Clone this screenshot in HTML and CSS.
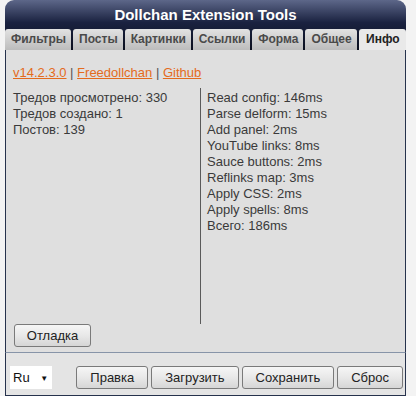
FILE: index.html
```html
<html lang="ru">
<head>
  <meta charset="UTF-8" />
  <title>Dollchan Extension Tools</title>
  <link rel="stylesheet" href="styles.css">
</head>
<body>
  <div class="panel">
    <div class="header">
      <div class="title">Dollchan Extension Tools</div>
      <div class="tabs">
        <div class="tab">Фильтры</div>
        <div class="tab">Посты</div>
        <div class="tab">Картинки</div>
        <div class="tab">Ссылки</div>
        <div class="tab">Форма</div>
        <div class="tab">Общее</div>
        <div class="tab active">Инфо</div>
      </div>
    </div>

    <div class="content">
      <div class="links">
        <a href="#">v14.2.3.0</a> | <a href="#">Freedollchan</a> | <a href="#">Github</a>
      </div>
      <div class="info">
        <div class="col left">
          <div>Тредов просмотрено: 330</div>
          <div>Тредов создано: 1</div>
          <div>Постов: 139</div>
        </div>
        <div class="col right">
          <div>Read config: 146ms</div>
          <div>Parse delform: 15ms</div>
          <div>Add panel: 2ms</div>
          <div>YouTube links: 8ms</div>
          <div>Sauce buttons: 2ms</div>
          <div>Reflinks map: 3ms</div>
          <div>Apply CSS: 2ms</div>
          <div>Apply spells: 8ms</div>
          <div>Всего: 186ms</div>
        </div>
      </div>
      <button class="btn debug">Отладка</button>
    </div>

    <div class="footer">
      <div class="lang">Ru <span class="arrow">&#9660;</span></div>
      <div class="actions">
        <button class="btn">Правка</button>
        <button class="btn">Загрузить</button>
        <button class="btn">Сохранить</button>
        <button class="btn">Сброс</button>
      </div>
    </div>
  </div>
</body>
</html>
```

FILE: styles.css
```css
* {
  margin: 0;
  padding: 0;
  box-sizing: border-box;
}

body {
  font-family: "Liberation Sans", Arial, sans-serif;
  font-size: 13px;
  color: #333;
  background: #f3f3f3;
}

.panel {
  width: 401px;
  margin-left: 5px;
}

.header {
  background: linear-gradient(#5d6789 0%, #1a2240 45%, #0b0f1e 100%);
  border-radius: 9px 9px 0 0;
  padding-top: 5px;
}

.title {
  height: 24px;
  text-align: center;
  color: #fff;
  font-weight: bold;
  font-size: 15px;
  line-height: 20px;
}

.tabs {
  display: flex;
  gap: 2px;
}

.tab {
  height: 21px;
  line-height: 20px;
  padding: 0 5px 0 6px;
  font-size: 12px;
  font-weight: bold;
  color: #4a4a4a;
  background: linear-gradient(#e2e2e2, #bcbcbc);
  border-radius: 3px 3px 0 0;
}

.tab.active {
  flex: 1;
  color: #222;
  text-align: center;
  background: #e9e9e9;
}

.content {
  height: 302px;
  background: #dfdfdf;
  border-left: 1px solid #26324c;
  border-right: 1px solid #26324c;
  padding: 15px 7px 0;
  display: flex;
  flex-direction: column;
}

.links {
  line-height: 16px;
  color: #555;
}

.links a {
  color: #e46b1c;
}

.info {
  display: flex;
  margin-top: 7px;
  height: 236px;
}

.col {
  line-height: 16px;
  color: #3a3a3a;
}

.col.left {
  width: 187px;
  padding-top: 2px;
}

.col.right {
  border-left: 1px solid #5a5a5a;
  padding: 2px 0 0 6px;
}

.btn {
  font-family: "Liberation Sans", Arial, sans-serif;
  font-size: 13px;
  color: #222;
  height: 23px;
  padding: 0 10px;
  border: 1px solid #7a7a7a;
  border-radius: 3px;
  background: linear-gradient(#f6f6f6 0%, #e8e8e8 50%, #d6d6d6 100%);
}

.debug {
  align-self: flex-start;
  width: 77px;
  margin-left: 1px;
}

.footer {
  display: flex;
  align-items: flex-end;
  justify-content: space-between;
  height: 44px;
  background: #e4e4e4;
  border: 1px solid #26324c;
  border-top-color: #8794a8;
  padding: 0 2px 6px 4px;
}

.lang {
  width: 42px;
  height: 23px;
  background: #fff;
  line-height: 23px;
  padding-left: 3px;
  font-size: 13px;
  color: #111;
}

.arrow {
  font-size: 8px;
  margin-left: 7px;
  vertical-align: 1px;
}

.actions {
  display: flex;
  gap: 3px;
}

.actions .btn {
  padding: 0 13px;
}
```
